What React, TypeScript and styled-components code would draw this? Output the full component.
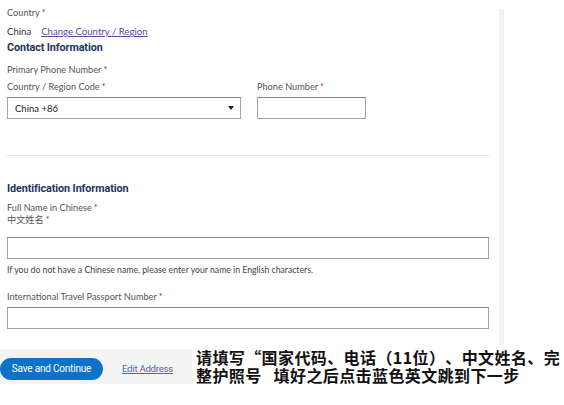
import React from 'react';
import styled, { createGlobalStyle } from 'styled-components';

const GlobalStyle = createGlobalStyle`
  html, body {
    margin: 0;
    padding: 0;
    background: #fff;
  }

  body {
    font-family: Lato, 'Noto Sans', sans-serif;
    -webkit-font-smoothing: antialiased;
  }
`;

const Page = styled.div`
  width: 564px;
  height: 405px;
  overflow: hidden;
  background: #fff;
  display: flex;
  flex-direction: column;
`;

const Main = styled.div`
  display: flex;
  align-items: stretch;
`;

const Form = styled.div`
  width: 499px;
  box-sizing: border-box;
  padding: 7px 10px 16px 7px;
`;

const ScrollStrip = styled.div`
  width: 5px;
  margin-top: 9px;
  background: #f3f3f3;
`;

const Label = styled.div<{ $top?: number; $bottom?: number; $lh?: number }>`
  font-size: 9.2px;
  line-height: ${(p) => p.$lh ?? 12}px;
  color: #555;
  margin-top: ${(p) => p.$top ?? 0}px;
  margin-bottom: ${(p) => p.$bottom ?? 0}px;
  white-space: nowrap;
  font-family: Lato, 'Noto Sans CJK SC', sans-serif;
`;

const Req = styled.span`
  color: #c8102e;
  margin-left: 2px;
`;

const ValueRow = styled.div`
  margin-top: 7px;
  font-size: 9.6px;
  line-height: 12px;
  color: #333;
  display: flex;
  gap: 10px;
`;

const RegionLink = styled.a`
  color: #5a4d9c;
  text-decoration: underline;
  cursor: pointer;
`;

const SectionTitle = styled.h3<{ $top: number }>`
  margin: ${(p) => p.$top}px 0 0;
  font-family: Roboto, 'Liberation Sans', sans-serif;
  font-weight: 700;
  font-size: 10.8px;
  line-height: 14px;
  color: #1f3462;
  letter-spacing: -0.1px;
`;

const PhoneRow = styled.div`
  margin-top: 5px;
  display: flex;
  gap: 16px;
`;

const Field = styled.div<{ $width: number }>`
  width: ${(p) => p.$width}px;
`;

const SelectBox = styled.div`
  height: 22px;
  box-sizing: border-box;
  border: 1px solid #a3a3a3;
  border-top-color: #8a8a8a;
  display: flex;
  align-items: center;
  justify-content: space-between;
  padding: 0 6px 0 7px;
  font-size: 9.5px;
  color: #222;
`;

const TextInput = styled.input<{ $top?: number }>`
  display: block;
  width: 100%;
  height: 22px;
  box-sizing: border-box;
  margin: ${(p) => p.$top ?? 0}px 0 0;
  border: 1px solid #a3a3a3;
  border-top-color: #8a8a8a;
  border-radius: 0;
  outline: none;
  padding: 0 6px;
  font-family: Lato, sans-serif;
  font-size: 10px;
  background: #fff;
`;

const Divider = styled.hr`
  margin: 36px 0 0;
  border: none;
  border-top: 1px solid #dedede;
  height: 0;
`;

const HelpText = styled.p`
  margin: 5px 0 0;
  font-size: 8.7px;
  line-height: 12px;
  color: #444;
  white-space: nowrap;
`;

const Footer = styled.div`
  margin-top: 3px;
  display: flex;
  align-items: center;
`;

const ActionBar = styled.div`
  width: 192px;
  height: 35px;
  box-sizing: border-box;
  padding-top: 5px;
  background: #f4f4f4;
  display: flex;
  align-items: center;
  flex-shrink: 0;
`;

const PrimaryButton = styled.button`
  width: 103px;
  height: 22px;
  border: none;
  border-radius: 11px;
  background: #0f72c9;
  color: #fff;
  font-family: Roboto, 'Liberation Sans', sans-serif;
  font-size: 10px;
  letter-spacing: -0.2px;
  padding: 0;
  margin-right: 19px;
  cursor: pointer;
`;

const EditLink = styled.a`
  color: #3a6db3;
  font-family: Roboto, 'Liberation Sans', sans-serif;
  font-size: 9.5px;
  letter-spacing: -0.2px;
  text-decoration: underline;
  cursor: pointer;
`;

const Note = styled.div`
  padding-left: 4px;
  font-family: 'Noto Sans CJK SC', 'Noto Sans', sans-serif;
  font-weight: 700;
  font-size: 16px;
  line-height: 18px;
  letter-spacing: 0.4px;
  color: #111;
  white-space: nowrap;
  background: #fff;
  text-spacing-trim: space-all;
`;

const Arrow = () => (
  <svg aria-hidden width='6' height='4' viewBox='0 0 6 4'>
    <path d='M0 0h6L3 4z' fill='#222' />
  </svg>
);

const App = () => (
  <>
    <GlobalStyle />
    <Page>
      <Main>
        <Form>
          <Label>
            Country<Req>*</Req>
          </Label>
          <ValueRow>
            <span>China</span>
            <RegionLink>Change Country / Region</RegionLink>
          </ValueRow>
          <SectionTitle $top={3}>Contact Information</SectionTitle>
          <Label $top={9}>
            Primary Phone Number<Req>*</Req>
          </Label>
          <PhoneRow>
            <Field $width={234}>
              <Label $bottom={4}>
                Country / Region Code<Req>*</Req>
              </Label>
              <SelectBox>
                <span>China +86</span>
                <Arrow />
              </SelectBox>
            </Field>
            <Field $width={109}>
              <Label $bottom={4}>
                Phone Number<Req>*</Req>
              </Label>
              <TextInput type='tel' />
            </Field>
          </PhoneRow>
          <Divider />
          <SectionTitle $top={26}>Identification Information</SectionTitle>
          <Label $top={6}>
            Full Name in Chinese<Req>*</Req>
          </Label>
          <Label $lh={11}>
            中文姓名<Req>*</Req>
          </Label>
          <TextInput $top={12} />
          <HelpText>
            If you do not have a Chinese name, please enter your name in English
            characters.
          </HelpText>
          <Label $top={15} $bottom={4}>
            International Travel Passport Number<Req>*</Req>
          </Label>
          <TextInput />
        </Form>
        <ScrollStrip />
      </Main>
      <Footer>
        <ActionBar>
          <PrimaryButton>Save and Continue</PrimaryButton>
          <EditLink>Edit Address</EditLink>
        </ActionBar>
        <Note lang='zh-CN'>
          请填写“国家代码、电话（11位）、中文姓名、完
          <br />
          整护照号{'\u2002\u2009'}填好之后点击蓝色英文跳到下一步
        </Note>
      </Footer>
    </Page>
  </>
);

export default App;
